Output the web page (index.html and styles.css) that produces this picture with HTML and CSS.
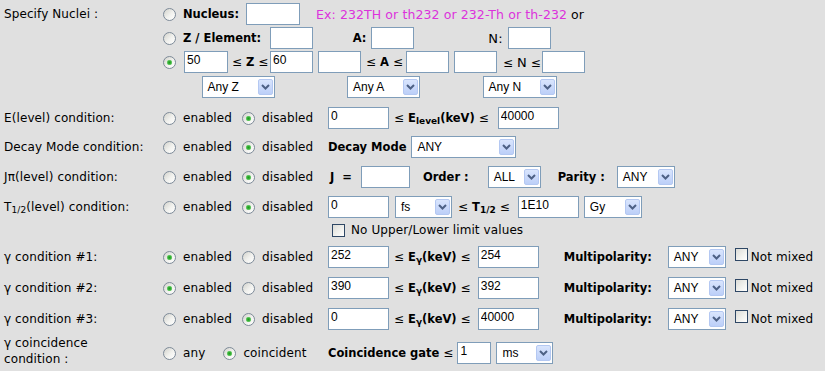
FILE: index.html
```html
<!DOCTYPE html>
<html lang="en">
<head>
    <meta charset="UTF-8">
    <meta name="viewport" content="width=device-width, initial-scale=1.0">
    <title>Nuclear Data Search</title>
    <link rel="stylesheet" href="styles.css">
</head>
<body>
<form class="search">
    <!-- nuclei selection -->
    <div class="row">
        <div class="label top">Specify Nuclei :</div>
        <div class="nuclei">
            <div class="nline">
                <input type="radio" name="nuc" class="radio">
                <b class="key ml7">Nucleus:</b>
                <input type="text" class="field w54 ml7">
                <span class="example">Ex: 232TH or th232 or 232-Th or th-232</span>&nbsp;or
            </div>
            <div class="ngrid">
                <div class="cell">
                    <input type="radio" name="nuc" class="radio">
                    <b class="key ml7">Z / Element:</b>
                    <input type="text" class="field w43 push">
                </div>
                <div class="cell center">
                    <b class="key">A:</b>
                    <input type="text" class="field w43 ml5">
                </div>
                <div class="cell center">
                    <span class="big">N:</span>
                    <input type="text" class="field w43 ml5">
                </div>
            </div>
            <div class="ngrid">
                <div class="cell">
                    <input type="radio" name="nuc" class="radio" checked>
                    <input type="text" class="field w44 ml8" value="50">
                    <span class="ml4">&le; <b class="key">Z</b> &le;</span>
                    <input type="text" class="field w43 push" value="60">
                </div>
                <div class="cell">
                    <input type="text" class="field w43">
                    <span class="ml5">&le; <b class="key">A</b> &le;</span>
                    <input type="text" class="field w43 push">
                </div>
                <div class="cell">
                    <input type="text" class="field w43">
                    <span class="ml6">&le; <span class="big">N</span> &le;</span>
                    <input type="text" class="field w43 push">
                </div>
            </div>
            <div class="ngrid last">
                <div class="cell center">
                    <div class="select w73"><span class="value">Any Z</span><span class="drop"><svg width="9" height="6" viewBox="0 0 9 6"><path d="M1 1l3.5 3.5L8 1"/></svg></span></div>
                </div>
                <div class="cell center">
                    <div class="select w73"><span class="value">Any A</span><span class="drop"><svg width="9" height="6" viewBox="0 0 9 6"><path d="M1 1l3.5 3.5L8 1"/></svg></span></div>
                </div>
                <div class="cell center">
                    <div class="select w74"><span class="value">Any N</span><span class="drop"><svg width="9" height="6" viewBox="0 0 9 6"><path d="M1 1l3.5 3.5L8 1"/></svg></span></div>
                </div>
            </div>
        </div>
    </div>

    <div class="row mt9">
        <div class="label">E(level) condition:</div>
        <div class="choices">
            <input type="radio" name="el" class="radio"><span class="ml7">enabled</span>
            <input type="radio" name="el" class="radio ml10" checked><span class="ml7">disabled</span>
        </div>
        <div class="detail">
            <input type="text" class="field w61" value="0">
            <span class="ml5">&le; <b class="key">E<span class="sub">level</span>(keV)</b> &le;</span>
            <input type="text" class="field w61 ml9" value="40000">
        </div>
    </div>

    <div class="row mt7">
        <div class="label">Decay Mode condition:</div>
        <div class="choices">
            <input type="radio" name="dm" class="radio"><span class="ml7">enabled</span>
            <input type="radio" name="dm" class="radio ml10" checked><span class="ml7">disabled</span>
        </div>
        <div class="detail">
            <b class="key">Decay Mode</b>
            <div class="select w105 ml5"><span class="value">ANY</span><span class="drop"><svg width="9" height="6" viewBox="0 0 9 6"><path d="M1 1l3.5 3.5L8 1"/></svg></span></div>
        </div>
    </div>

    <div class="row">
        <div class="label">J&pi;(level) condition:</div>
        <div class="choices">
            <input type="radio" name="jp" class="radio"><span class="ml7">enabled</span>
            <input type="radio" name="jp" class="radio ml10" checked><span class="ml7">disabled</span>
        </div>
        <div class="detail">
            <b class="key ml2">J &nbsp;=</b>
            <input type="text" class="field w49 ml9">
            <b class="key ml13">Order :</b>
            <div class="select w53 ml19"><span class="value">ALL</span><span class="drop"><svg width="9" height="6" viewBox="0 0 9 6"><path d="M1 1l3.5 3.5L8 1"/></svg></span></div>
            <b class="key ml17">Parity :</b>
            <div class="select w58 ml12"><span class="value">ANY</span><span class="drop"><svg width="9" height="6" viewBox="0 0 9 6"><path d="M1 1l3.5 3.5L8 1"/></svg></span></div>
        </div>
    </div>

    <div class="row">
        <div class="label">T<span class="sub">1/2</span>(level) condition:</div>
        <div class="choices">
            <input type="radio" name="th" class="radio"><span class="ml7">enabled</span>
            <input type="radio" name="th" class="radio ml10" checked><span class="ml7">disabled</span>
        </div>
        <div class="detail">
            <input type="text" class="field w61" value="0">
            <div class="select w57 ml6"><span class="value">fs</span><span class="drop"><svg width="9" height="6" viewBox="0 0 9 6"><path d="M1 1l3.5 3.5L8 1"/></svg></span></div>
            <span class="ml6">&le; <b class="key">T<span class="sub">1/2</span></b> &le;</span>
            <input type="text" class="field w61 ml8" value="1E10">
            <div class="select w58 ml5"><span class="value">Gy</span><span class="drop"><svg width="9" height="6" viewBox="0 0 9 6"><path d="M1 1l3.5 3.5L8 1"/></svg></span></div>
        </div>
    </div>

    <div class="row short mt4">
        <div class="label"></div>
        <div class="choices"></div>
        <div class="detail">
            <input type="checkbox" class="check ml4">
            <span class="ml6">No Upper/Lower limit values</span>
        </div>
    </div>

    <div class="row">
        <div class="label">&gamma; condition #1:</div>
        <div class="choices">
            <input type="radio" name="g1" class="radio" checked><span class="ml7">enabled</span>
            <input type="radio" name="g1" class="radio ml10"><span class="ml7">disabled</span>
        </div>
        <div class="detail">
            <input type="text" class="field w61" value="252">
            <span class="ml5">&le; <b class="key">E<span class="sub">&gamma;</span>(keV)</b> &le;</span>
            <input type="text" class="field w61 ml7" value="254">
            <b class="key ml25">Multipolarity:</b>
            <div class="select w58 ml16"><span class="value">ANY</span><span class="drop"><svg width="9" height="6" viewBox="0 0 9 6"><path d="M1 1l3.5 3.5L8 1"/></svg></span></div>
            <input type="checkbox" class="check raised ml9">
            <span class="ml3">Not mixed</span>
        </div>
    </div>

    <div class="row mt9">
        <div class="label">&gamma; condition #2:</div>
        <div class="choices">
            <input type="radio" name="g2" class="radio" checked><span class="ml7">enabled</span>
            <input type="radio" name="g2" class="radio ml10"><span class="ml7">disabled</span>
        </div>
        <div class="detail">
            <input type="text" class="field w61" value="390">
            <span class="ml5">&le; <b class="key">E<span class="sub">&gamma;</span>(keV)</b> &le;</span>
            <input type="text" class="field w61 ml7" value="392">
            <b class="key ml25">Multipolarity:</b>
            <div class="select w58 ml16"><span class="value">ANY</span><span class="drop"><svg width="9" height="6" viewBox="0 0 9 6"><path d="M1 1l3.5 3.5L8 1"/></svg></span></div>
            <input type="checkbox" class="check raised ml9">
            <span class="ml3">Not mixed</span>
        </div>
    </div>

    <div class="row mt9">
        <div class="label">&gamma; condition #3:</div>
        <div class="choices">
            <input type="radio" name="g3" class="radio"><span class="ml7">enabled</span>
            <input type="radio" name="g3" class="radio ml10" checked><span class="ml7">disabled</span>
        </div>
        <div class="detail">
            <input type="text" class="field w61" value="0">
            <span class="ml5">&le; <b class="key">E<span class="sub">&gamma;</span>(keV)</b> &le;</span>
            <input type="text" class="field w61 ml7" value="40000">
            <b class="key ml25">Multipolarity:</b>
            <div class="select w58 ml16"><span class="value">ANY</span><span class="drop"><svg width="9" height="6" viewBox="0 0 9 6"><path d="M1 1l3.5 3.5L8 1"/></svg></span></div>
            <input type="checkbox" class="check raised ml9">
            <span class="ml3">Not mixed</span>
        </div>
    </div>

    <div class="row two-line">
        <div class="label lines">&gamma; coincidence<br>condition :</div>
        <div class="choices">
            <input type="radio" name="gc" class="radio"><span class="ml7">any</span>
            <input type="radio" name="gc" class="radio ml18" checked><span class="ml7">coincident</span>
        </div>
        <div class="detail">
            <b class="key">Coincidence gate</b>&nbsp;&le;
            <input type="text" class="field w34 ml4" value="1">
            <div class="select w57 ml5"><span class="value">ms</span><span class="drop"><svg width="9" height="6" viewBox="0 0 9 6"><path d="M1 1l3.5 3.5L8 1"/></svg></span></div>
        </div>
    </div>
</form>
</body>
</html>
```

FILE: styles.css
```css
* {
    box-sizing: border-box;
}
body {
    margin: 0;
    background-color: #e0e0e0;
    font-family: "DejaVu Sans", Verdana, sans-serif;
    font-size: 12px;
    letter-spacing: 0.1px;
    color: #000;
}
.search {
    padding: 3px 0 0 4px;
}

/* one condition per row: label | enabled/disabled | details */
.row {
    display: grid;
    grid-template-columns: 159px 165px auto;
    align-items: center;
    margin-top: 8px;
    min-height: 22px;
}
.row:first-child {
    margin-top: 0;
}
.row.short {
    min-height: 16px;
}
.mt4 { margin-top: 4px; }
.mt7 { margin-top: 7px; }
.mt9 { margin-top: 9px; }

.label.top {
    align-self: start;
    line-height: 22px;
}

/* last row has a label on two lines */
.row.two-line {
    margin-top: 5px;
}
.label.lines {
    align-self: start;
    line-height: 16px;
}
.row.two-line .choices,
.row.two-line .detail {
    padding-top: 4px;
}

.choices, .detail {
    display: flex;
    align-items: center;
    white-space: nowrap;
}

/* nuclei block */
.nuclei {
    grid-column: 2 / 4;
}
.nline {
    display: flex;
    align-items: center;
    height: 22px;
    white-space: nowrap;
    font-size: 12.5px;
}
.ngrid {
    display: grid;
    grid-template-columns: 150px 131px 131px;
    column-gap: 5px;
    height: 22px;
    margin-top: 2px;
}
.ngrid.last {
    margin-top: 3px;
}
.cell {
    display: flex;
    align-items: center;
    white-space: nowrap;
}
.cell.center {
    justify-content: center;
}
.push {
    margin-left: auto;
}
.example {
    margin-left: 16px;
    color: #dc32dc;
}

.key {
    font-weight: bold;
    font-size: 11.5px;
    letter-spacing: 0;
}
.big {
    font-size: 13px;
}
.sub {
    font-size: 9px;
    position: relative;
    top: 2px;
}

/* form controls drawn in the old XP look */
.radio {
    appearance: none;
    -webkit-appearance: none;
    flex: none;
    width: 13px;
    height: 13px;
    margin: 0;
    border: 1px solid #7d8a98;
    border-radius: 50%;
    background: linear-gradient(135deg, #d2d2cc 0%, #f2f2ef 55%, #fff 100%);
}
.radio:checked {
    background: radial-gradient(circle, #1f9a1f 0, #38b238 1.5px, #7fd27f 2.5px, transparent 3px),
                linear-gradient(135deg, #d2d2cc 0%, #f2f2ef 55%, #fff 100%);
}
.check {
    appearance: none;
    -webkit-appearance: none;
    flex: none;
    width: 13px;
    height: 13px;
    margin: 0;
    border: 1px solid #2e4765;
    background: linear-gradient(135deg, #dcdcd7 0%, #f2f2ef 60%, #fff 100%);
}
.check.raised {
    margin-bottom: 5px;
}
.field {
    flex: none;
    height: 22px;
    margin-top: 0;
    margin-bottom: 0;
    border: 1px solid #7f9db9;
    background: #fff;
    padding: 0 2px 4px;
    font-family: "Liberation Sans", Arial, sans-serif;
    font-size: 12px;
    color: #000;
}
.select {
    flex: none;
    display: flex;
    align-items: center;
    height: 22px;
    border: 1px solid #7f9db9;
    background: #fff;
    padding: 0 1px 0 5px;
    font-family: "Liberation Sans", Arial, sans-serif;
    font-size: 12px;
    letter-spacing: 0;
}
.select .value {
    flex: 1;
}
.drop {
    flex: none;
    display: flex;
    align-items: center;
    justify-content: center;
    width: 15px;
    height: 16px;
    border: 1px solid #b4c8f2;
    border-radius: 2px;
    background: linear-gradient(#d9e5fd, #bccff8);
}
.drop path {
    fill: none;
    stroke: #4d6185;
    stroke-width: 2;
}

/* widths */
.w34 { width: 34px; }
.w43 { width: 43px; }
.w44 { width: 44px; }
.w49 { width: 49px; }
.w53 { width: 53px; }
.w54 { width: 54px; }
.w57 { width: 57px; }
.w58 { width: 58px; }
.w61 { width: 61px; }
.w73 { width: 73px; }
.w74 { width: 74px; }
.w105 { width: 105px; }

/* spacing */
.ml2 { margin-left: 2px; }
.ml3 { margin-left: 3px; }
.ml4 { margin-left: 4px; }
.ml5 { margin-left: 5px; }
.ml6 { margin-left: 6px; }
.ml7 { margin-left: 7px; }
.ml8 { margin-left: 8px; }
.ml9 { margin-left: 9px; }
.ml10 { margin-left: 10px; }
.ml12 { margin-left: 12px; }
.ml13 { margin-left: 13px; }
.ml16 { margin-left: 16px; }
.ml17 { margin-left: 17px; }
.ml18 { margin-left: 18px; }
.ml19 { margin-left: 19px; }
.ml25 { margin-left: 25px; }
```
